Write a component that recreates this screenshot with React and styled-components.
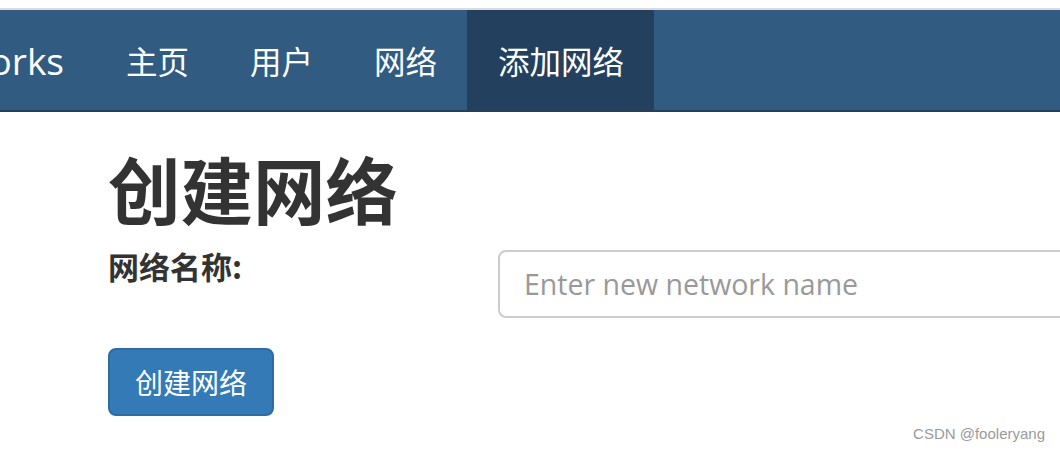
import React from 'react'
import styled, { createGlobalStyle } from 'styled-components'

const GlobalStyle = createGlobalStyle`
  body {
    margin: 0;
    background: #fff;
    font-family: "Open Sans", "Noto Sans CJK SC", sans-serif;
    color: #333;
  }
`

const TopRule = styled.div`
  height: 8px;
  border-bottom: 2px solid #dcdcdc;
`

const Navbar = styled.nav`
  display: flex;
  align-items: stretch;
  height: 100px;
  background: #315b80;
  border-bottom: 2px solid #233f5a;
`

const Brand = styled.div`
  width: 95px;
  box-sizing: border-box;
  padding-right: 31px;
  display: flex;
  justify-content: flex-end;
  align-items: center;
  overflow: hidden;
  white-space: nowrap;
  color: #fff;
  font-size: 37px;
`

const NavItem = styled.a`
  display: flex;
  align-items: center;
  padding: 0 30px 0 31px;
  font-size: 31.5px;
  font-family: "Noto Sans CJK SC", sans-serif;
  color: #fff;
  text-decoration: none;
  background: ${p => (p.$active ? '#23415e' : 'transparent')};
`

const Container = styled.main`
  padding: 36px 0 0 108px;
`

const Title = styled.h1`
  margin: 0 0 22px;
  font-family: "Noto Sans CJK SC", sans-serif;
  font-size: 72.5px;
  line-height: 1.1;
  font-weight: 700;
  color: #333;
`

const FormRow = styled.div`
  display: grid;
  grid-template-columns: 390px 1fr;
  align-items: start;
`

const Label = styled.label`
  font-family: "Noto Sans CJK SC", sans-serif;
  font-size: 31px;
  font-weight: 700;
  line-height: 32px;
`

const Input = styled.input`
  box-sizing: border-box;
  width: calc(100% + 40px);
  height: 68px;
  padding: 0 24px;
  border: 2px solid #cccccc;
  border-radius: 8px;
  font-family: "Open Sans", sans-serif;
  font-size: 28.5px;
  color: #555;
  outline: none;
  &::placeholder {
    color: #999;
  }
`

const Button = styled.button`
  margin-top: 30px;
  height: 68px;
  padding: 0 25px;
  background: #337ab7;
  border: 2px solid #2e6da4;
  border-radius: 8px;
  color: #fff;
  font-family: "Noto Sans CJK SC", sans-serif;
  font-size: 28px;
  cursor: pointer;
`

const Page = styled.div`
  overflow: hidden;
  height: 452px;
  position: relative;
`

const Watermark = styled.div`
  position: absolute;
  right: 15px;
  bottom: 10px;
  font-family: "Liberation Sans", sans-serif;
  font-size: 15px;
  color: #9a9a9a;
`

export default function App() {
  return (
    <Page>
      <GlobalStyle />
      <TopRule />
      <Navbar>
        <Brand>Networks</Brand>
        <NavItem href="#">主页</NavItem>
        <NavItem href="#">用户</NavItem>
        <NavItem href="#">网络</NavItem>
        <NavItem href="#" $active>添加网络</NavItem>
      </Navbar>
      <Container>
        <Title>创建网络</Title>
        <FormRow>
          <Label>网络名称:</Label>
          <Input placeholder="Enter new network name" />
        </FormRow>
        <Button>创建网络</Button>
      </Container>
      <Watermark>CSDN @fooleryang</Watermark>
    </Page>
  )
}
